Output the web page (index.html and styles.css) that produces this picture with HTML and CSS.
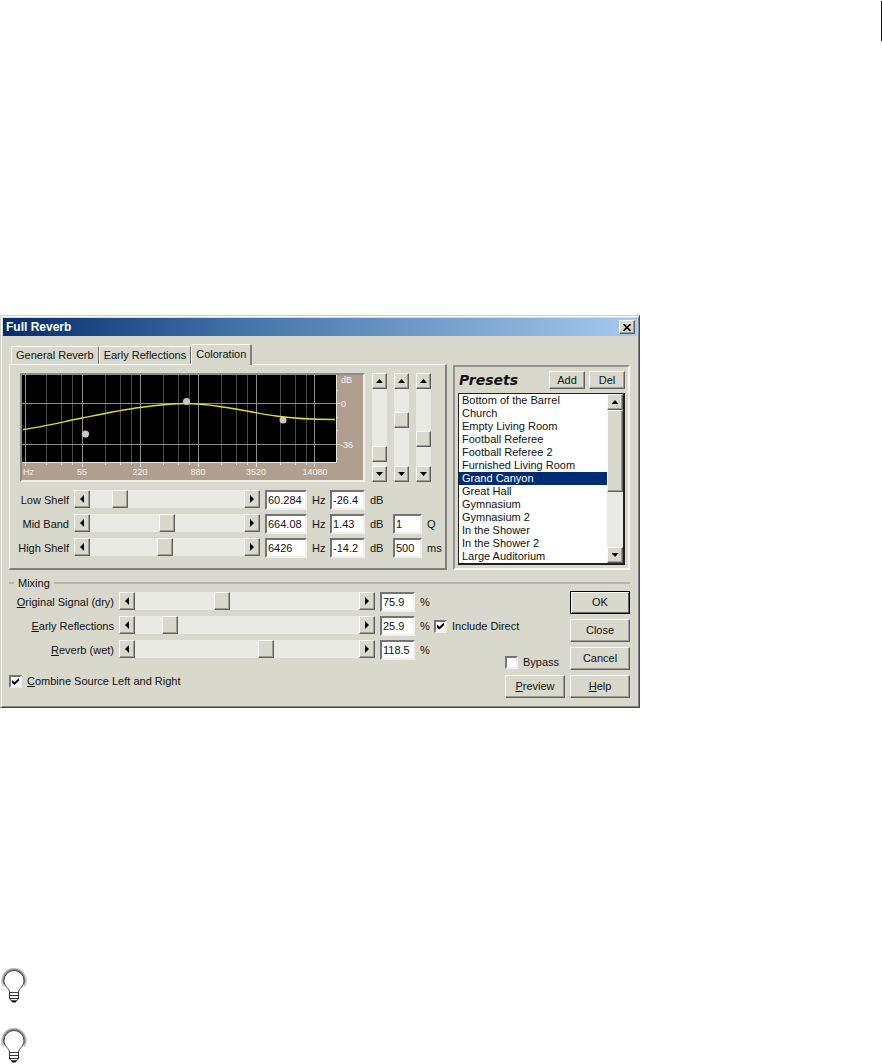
FILE: index.html
```html
<!DOCTYPE html>
<html lang="en">
<head>
    <meta charset="UTF-8">
    <meta name="viewport" content="width=device-width, initial-scale=1.0">
    <title>Full Reverb</title>
    <link rel="stylesheet" href="styles.css">
</head>
<body>

    <header class="page-top">
        <div class="page-rule"></div>
    </header>

    <main>
        <section class="dialog" aria-labelledby="dialogTitle">
            <div class="title-bar">
                <h1 id="dialogTitle">Full Reverb</h1>
                <button class="close" aria-label="Close window">
                    <svg width="8" height="7" viewBox="0 0 8 7"><path d="M0.5 0L7.5 7M7.5 0L0.5 7" stroke="#000" stroke-width="1.6"/></svg>
                </button>
            </div>

            <div class="dialog-body">
                <div class="columns">

                    <!-- Tabs -->
                    <div class="tab-area">
                        <div class="tabs" role="tablist">
                            <button class="tab" role="tab">General Reverb</button>
                            <button class="tab" role="tab">Early Reflections</button>
                            <button class="tab active" role="tab" aria-selected="true">Coloration</button>
                        </div>

                        <div class="panel">
                            <div class="graph-row">
                                <div class="graph">
                                    <svg width="341" height="105" viewBox="0 0 341 105">
                                        <rect width="341" height="105" fill="#b09f8e"/>
                                        <rect width="314" height="87" fill="#000"/>
                                        <path class="minor" d="M24.5 0V90M39.5 0V90M50.5 0V90M83.5 0V90M98.5 0V90M109.5 0V90M141.5 0V90M156.5 0V90M167.5 0V90M199.5 0V90M214.5 0V90M225.5 0V90M258.5 0V90M273.5 0V90M284.5 0V90"/>
                                        <path class="major" d="M3.5 0V92M60.5 0V92M118.5 0V92M176.5 0V92M234.5 0V92M292.5 0V92M0 28.5H317M0 69.5H317"/>
                                        <path class="ticks" d="M0 87.5H314.5V0M314 15.5H316M314 42.5H316M314 55.5H316M314 83.5H316M314 28.5H318M314 69.5H318M3.5 87V91M24.5 87V90M39.5 87V90M50.5 87V90M60.5 87V92M83.5 87V90M98.5 87V90M109.5 87V90M118.5 87V92M141.5 87V90M156.5 87V90M167.5 87V90M176.5 87V92M199.5 87V90M214.5 87V90M225.5 87V90M234.5 87V92M258.5 87V90M273.5 87V90M284.5 87V90M292.5 87V92"/>
                                        <path class="curve" d="M1 54.5C20 52 40 47 60 43C80 39 99 35 118 32.5C136 30 150 28.5 164 28.5C195 28.5 225 37 254 41C275 44 290 44.5 313 44.5"/>
                                        <g class="points">
                                            <circle cx="63.5" cy="59" r="3.5"/>
                                            <circle cx="164.5" cy="26.5" r="3.5"/>
                                            <circle cx="261" cy="45" r="3.5"/>
                                        </g>
                                        <g class="axis">
                                            <text x="1" y="100">Hz</text>
                                            <text x="60" y="100" text-anchor="middle">55</text>
                                            <text x="118" y="100" text-anchor="middle">220</text>
                                            <text x="176" y="100" text-anchor="middle">880</text>
                                            <text x="234" y="100" text-anchor="middle">3520</text>
                                            <text x="293" y="100" text-anchor="middle">14080</text>
                                            <text x="319" y="8">dB</text>
                                            <text x="319" y="32">0</text>
                                            <text x="318" y="73">-36</text>
                                        </g>
                                    </svg>
                                </div>
                                <div class="v-slider">
                                    <button class="arrow up" aria-label="Raise low shelf"></button>
                                    <input type="range" min="0" max="61" value="4" aria-label="Low shelf level">
                                    <button class="arrow down" aria-label="Lower low shelf"></button>
                                </div>
                                <div class="v-slider">
                                    <button class="arrow up" aria-label="Raise mid band"></button>
                                    <input type="range" min="0" max="61" value="38" aria-label="Mid band level">
                                    <button class="arrow down" aria-label="Lower mid band"></button>
                                </div>
                                <div class="v-slider">
                                    <button class="arrow up" aria-label="Raise high shelf"></button>
                                    <input type="range" min="0" max="61" value="19" aria-label="High shelf level">
                                    <button class="arrow down" aria-label="Lower high shelf"></button>
                                </div>
                            </div>

                            <div class="bands">
                                <label class="name" for="lowShelf">Low Shelf</label>
                                <div class="slider">
                                    <button class="arrow left" aria-label="Less"></button>
                                    <input type="range" id="lowShelf" min="0" max="138" value="22">
                                    <button class="arrow right" aria-label="More"></button>
                                </div>
                                <input class="value" type="text" id="lowHz" value="60.284">
                                <label for="lowHz">Hz</label>
                                <input class="value" type="text" id="lowDb" value="-26.4">
                                <label class="wide" for="lowDb">dB</label>

                                <label class="name" for="midBand">Mid Band</label>
                                <div class="slider">
                                    <button class="arrow left" aria-label="Less"></button>
                                    <input type="range" id="midBand" min="0" max="138" value="69">
                                    <button class="arrow right" aria-label="More"></button>
                                </div>
                                <input class="value" type="text" id="midHz" value="664.08">
                                <label for="midHz">Hz</label>
                                <input class="value" type="text" id="midDb" value="1.43">
                                <label for="midDb">dB</label>
                                <input class="value" type="text" id="midQ" value="1">
                                <label for="midQ">Q</label>

                                <label class="name" for="highShelf">High Shelf</label>
                                <div class="slider">
                                    <button class="arrow left" aria-label="Less"></button>
                                    <input type="range" id="highShelf" min="0" max="138" value="67">
                                    <button class="arrow right" aria-label="More"></button>
                                </div>
                                <input class="value" type="text" id="highHz" value="6426">
                                <label for="highHz">Hz</label>
                                <input class="value" type="text" id="highDb" value="-14.2">
                                <label for="highDb">dB</label>
                                <input class="value" type="text" id="highMs" value="500">
                                <label for="highMs">ms</label>
                            </div>
                        </div>
                    </div>

                    <!-- Presets -->
                    <div class="presets">
                        <div class="presets-head">
                            <h2><label for="presetList">Presets</label></h2>
                            <button class="btn small">Add</button>
                            <button class="btn small">Del</button>
                        </div>
                        <div class="list">
                            <select id="presetList" size="13">
                                <option>Bottom of the Barrel</option>
                                <option>Church</option>
                                <option>Empty Living Room</option>
                                <option>Football Referee</option>
                                <option>Football Referee 2</option>
                                <option>Furnished Living Room</option>
                                <option selected>Grand Canyon</option>
                                <option>Great Hall</option>
                                <option>Gymnasium</option>
                                <option>Gymnasium 2</option>
                                <option>In the Shower</option>
                                <option>In the Shower 2</option>
                                <option>Large Auditorium</option>
                            </select>
                            <div class="scrollbar">
                                <button class="arrow up" aria-label="Scroll up"></button>
                                <div class="scroll-thumb"></div>
                                <button class="arrow down" aria-label="Scroll down"></button>
                            </div>
                        </div>
                    </div>
                </div>

                <!-- Mixing -->
                <fieldset class="mixing">
                    <legend>Mixing</legend>
                    <div class="mixing-grid">
                        <div class="mixing-left">
                            <div class="mix-rows">
                                <label class="name" for="dry"><u>O</u>riginal Signal (dry)</label>
                                <div class="slider">
                                    <button class="arrow left" aria-label="Less"></button>
                                    <input type="range" id="dry" min="0" max="208" value="79">
                                    <button class="arrow right" aria-label="More"></button>
                                </div>
                                <input class="value" type="text" id="dryPct" value="75.9">
                                <label class="wide" for="dryPct">%</label>

                                <label class="name" for="early"><u>E</u>arly Reflections</label>
                                <div class="slider">
                                    <button class="arrow left" aria-label="Less"></button>
                                    <input type="range" id="early" min="0" max="208" value="27">
                                    <button class="arrow right" aria-label="More"></button>
                                </div>
                                <input class="value" type="text" id="earlyPct" value="25.9">
                                <label for="earlyPct">%</label>
                                <label class="check"><input type="checkbox" checked>Include Direct</label>

                                <label class="name" for="wet"><u>R</u>everb (wet)</label>
                                <div class="slider">
                                    <button class="arrow left" aria-label="Less"></button>
                                    <input type="range" id="wet" min="0" max="208" value="123">
                                    <button class="arrow right" aria-label="More"></button>
                                </div>
                                <input class="value" type="text" id="wetPct" value="118.5">
                                <label class="wide" for="wetPct">%</label>
                            </div>
                            <label class="check"><input type="checkbox" checked><span><u>C</u>ombine Source Left and Right</span></label>
                        </div>

                        <div class="preview">
                            <label class="check"><input type="checkbox">Bypass</label>
                            <button class="btn"><u>P</u>review</button>
                        </div>

                        <div class="actions">
                            <button class="btn default">OK</button>
                            <button class="btn">Close</button>
                            <button class="btn">Cancel</button>
                            <button class="btn"><u>H</u>elp</button>
                        </div>
                    </div>
                </fieldset>
            </div>
        </section>

        <!-- Tips -->
        <div class="tips">
            <svg class="bulb" width="28" height="36" viewBox="0 0 28 36">
                <path class="halo" d="M5 18A10.5 10.5 0 1 1 23 18"/>
                <path class="halo inner" d="M4.500 16A10.2 10.2 0 1 1 23.500 16"/>
                <path class="glass" d="M9.500 24.500C9.500 20 4 19 4 12.500A10 10 0 0 1 24 12.500C24 19 18.500 20 18.500 24.500Z"/>
                <path class="base" d="M9.500 24V31L12 33H16L18.500 31V24M9.500 27.500H18.500M9.500 30.500H18.500"/>
                <path class="cap" d="M11 32.500H17L15.500 34.500H12.500Z"/>
            </svg>
            <svg class="bulb" width="28" height="36" viewBox="0 0 28 36">
                <path class="halo" d="M5 18A10.5 10.5 0 1 1 23 18"/>
                <path class="halo inner" d="M4.500 16A10.2 10.2 0 1 1 23.500 16"/>
                <path class="glass" d="M9.500 24.500C9.500 20 4 19 4 12.500A10 10 0 0 1 24 12.500C24 19 18.500 20 18.500 24.500Z"/>
                <path class="base" d="M9.500 24V31L12 33H16L18.500 31V24M9.500 27.500H18.500M9.500 30.500H18.500"/>
                <path class="cap" d="M11 32.500H17L15.500 34.500H12.500Z"/>
            </svg>
        </div>
    </main>

</body>
</html>
```
FILE: styles.css
```css
* {
    box-sizing: border-box;
}

body {
    margin: 0;
    background: white;
    color: #111;
    font-family: "Liberation Sans", Arial, sans-serif;
    font-size: 11px;
    line-height: 13px;
}

button,
input,
select {
    margin: 0;
    padding: 0;
    border: 0;
    border-radius: 0;
    color: inherit;
    font: inherit;
}

.page-top {
    display: flex;
    justify-content: flex-end;
    padding-top: 1px;
}

.page-rule {
    width: 1px;
    height: 40px;
    background: #111;
}

/* Window */
.dialog {
    width: 640px;
    max-width: 100%;
    margin-top: 274px;
    padding: 2px;
    background: #d8d8cc;
    border: 1px solid;
    border-color: #d0d0c6 #484848 #484848 #d0d0c6;
    box-shadow: inset 1px 1px white, inset -1px -1px #848484;
}

.title-bar {
    display: flex;
    align-items: center;
    justify-content: space-between;
    height: 18px;
    padding: 0 2px 0 3px;
    background: linear-gradient(90deg, #042c6c, #4474a8 38%, #a6caf0);
    color: white;
}

.title-bar h1 {
    margin: 0;
    font-size: 12px;
    font-weight: bold;
}

.close {
    display: flex;
    align-items: center;
    justify-content: center;
    width: 16px;
    height: 14px;
}

.close,
.btn,
.arrow,
.scroll-thumb {
    background: #d8d8cc;
    border: 1px solid;
    border-color: #fafaf6 #606060 #606060 #fafaf6;
    box-shadow: inset -1px -1px #9c9c96;
}

.dialog-body {
    padding: 8px 7px 7px 6px;
}

.columns {
    display: flex;
    gap: 6px;
}

/* Tabs */
.tab-area {
    flex: 1;
    min-width: 0;
}

.tabs {
    display: flex;
    align-items: flex-end;
    height: 20px;
    padding-left: 2px;
}

.tab {
    height: 18px;
    padding: 0 4px;
    background: #d8d8cc;
    border: 1px solid;
    border-color: #fafaf6 #686868 transparent #fafaf6;
    border-radius: 2px 2px 0 0;
    white-space: nowrap;
}

.tab.active {
    position: relative;
    height: 21px;
    margin-bottom: -1px;
    padding-bottom: 2px;
    border-right: 2px solid #808080;
    border-bottom: 0;
}

.panel {
    padding: 8px 10px 10px;
    border: 1px solid #fafaf6;
    border-right: 2px solid #808080;
    border-bottom: 2px solid #808080;
}

.graph-row {
    display: flex;
    gap: 7px;
    height: 109px;
}

.graph {
    border: 2px solid;
    border-color: #8c8c88 #f0f0ea #f0f0ea #8c8c88;
}

.graph svg {
    display: block;
}

.minor,
.major,
.ticks,
.curve {
    fill: none;
}

.minor {
    stroke: #484848;
}

.major {
    stroke: #8c8c8c;
}

.ticks {
    stroke: #e8e4dc;
}

.curve {
    stroke: #e0e020;
    stroke-width: 1.3;
}

.points {
    fill: #c8c8c8;
}

.axis {
    fill: #f6f2ec;
    font-size: 9px;
}

/* Sliders */
input[type="range"] {
    -webkit-appearance: none;
    appearance: none;
    background: #eaeae5;
}

input[type="range"]::-webkit-slider-thumb {
    -webkit-appearance: none;
    appearance: none;
    width: 16px;
    height: 18px;
    background: #d8d8cc;
    border: 1px solid;
    border-color: #fafaf6 #606060 #606060 #fafaf6;
    box-shadow: inset -1px -1px #9c9c96;
}

.slider {
    display: flex;
    height: 18px;
}

.slider input {
    flex: 1;
    min-width: 0;
    height: 18px;
}

.v-slider {
    display: flex;
    flex-direction: column;
    width: 15px;
}

.v-slider input {
    flex: 1;
    width: 15px;
    min-height: 0;
    writing-mode: vertical-lr;
    direction: rtl;
}

.v-slider input::-webkit-slider-thumb {
    width: 15px;
    height: 16px;
}

.arrow {
    display: flex;
    flex: none;
    align-items: center;
    justify-content: center;
    width: 16px;
    height: 18px;
}

.v-slider .arrow,
.scrollbar .arrow {
    width: 100%;
    height: 16px;
}

.arrow::before {
    content: "";
    width: 4px;
    height: 8px;
    background: black;
}

.arrow.left::before {
    clip-path: polygon(100% 0, 100% 100%, 0 50%);
}

.arrow.right::before {
    clip-path: polygon(0 0, 100% 50%, 0 100%);
}

.arrow.up::before,
.arrow.down::before {
    width: 7px;
    height: 4px;
}

.arrow.up::before {
    clip-path: polygon(50% 0, 100% 100%, 0 100%);
}

.arrow.down::before {
    clip-path: polygon(0 0, 100% 0, 50% 100%);
}

/* Value rows */
.bands,
.mix-rows {
    display: grid;
    grid-auto-rows: 20px;
    gap: 4px 5px;
    align-items: center;
    white-space: nowrap;
}

.bands {
    grid-template-columns: 49px 186px 42px 13px 35px 18px 29px 1fr;
    margin-top: 8px;
}

.mix-rows {
    grid-template-columns: 105px 256px 35px 9px 1fr;
}

.bands .wide {
    grid-column: span 3;
}

.mix-rows .wide {
    grid-column: span 2;
}

.name {
    justify-self: end;
}

.slider {
    align-self: start;
}

.value {
    width: 100%;
    height: 20px;
    padding: 0 1px;
    background: white;
    border: 2px solid;
    border-color: #747474 #f0f0ea #f0f0ea #747474;
}

/* Presets */
.presets {
    flex: none;
    width: 177px;
    margin-top: 21px;
    padding: 4px 3px 3px;
    border: 2px solid;
    border-color: #949490 #f6f6f2 #f6f6f2 #949490;
}

.presets-head {
    display: flex;
    gap: 4px;
    margin-bottom: 4px;
}

.presets-head h2 {
    flex: 1;
    margin: 0;
    padding-left: 1px;
    font-family: "DejaVu Sans", Verdana, sans-serif;
    font-size: 14px;
    font-style: italic;
    font-weight: bold;
    line-height: 18px;
}

.list {
    display: flex;
    height: 172px;
    background: white;
    border: 1px solid #202020;
    border-right-width: 2px;
    border-bottom-width: 2px;
}

.list select {
    flex: 1;
    min-width: 0;
    height: 169px;
    background: white;
    outline: 0;
    overflow: hidden;
}

.list option {
    height: 13px;
    min-height: 13px;
    padding: 0 3px;
    line-height: 13px;
}

.list option:checked {
    background: linear-gradient(#002c74, #002c74);
    color: white;
    -webkit-text-fill-color: white;
}

.scrollbar {
    display: flex;
    flex-direction: column;
    width: 16px;
    background: #eaeae5;
}

.scroll-thumb {
    height: 82px;
    margin-bottom: auto;
}

/* Mixing */
.mixing {
    min-width: 0;
    margin: 6px 0 0;
    padding: 1px 0 0;
    border: 0;
    border-top: 2px ridge #b4b4b0;
    border-image: linear-gradient(#b4b4b0 50%, #fafaf6 50%) 2;
    border-image-width: 2px 0 0;
}

.mixing legend {
    margin-left: 5px;
    padding: 0 4px;
    line-height: 14px;
}

.mixing-grid {
    display: grid;
    grid-template-columns: 1fr 60px 60px;
    column-gap: 5px;
}

.mixing-left {
    grid-column: 1 / 3;
    grid-row: 1;
    padding-top: 1px;
}

.mixing-left > .check {
    margin-top: 15px;
}

.preview {
    display: flex;
    flex-direction: column;
    grid-column: 2;
    grid-row: 1;
    gap: 6px;
    align-self: end;
}

.actions {
    display: flex;
    flex-direction: column;
    grid-column: 3;
    grid-row: 1;
    gap: 5px;
}

.btn {
    height: 23px;
    padding: 0;
}

.btn.small {
    width: 36px;
    height: 18px;
}

.btn.default {
    outline: 1px solid black;
    outline-offset: -1px;
    border-color: black;
    box-shadow: inset 1px 1px #fafaf6, inset -1px -1px #606060;
}

.check {
    display: flex;
    align-items: center;
    gap: 5px;
    height: 13px;
}

.check input {
    display: grid;
    flex: none;
    place-items: center;
    -webkit-appearance: none;
    appearance: none;
    width: 13px;
    height: 13px;
    background: white;
    border: 2px solid;
    border-color: #747474 #f0f0ea #f0f0ea #747474;
}

.check input:checked::before {
    content: "";
    width: 7px;
    height: 7px;
    background: black;
    clip-path: polygon(0 30%, 35% 62%, 100% 0, 100% 38%, 35% 100%, 0 70%);
}

/* Tips */
.tips {
    display: flex;
    flex-direction: column;
    gap: 24px;
    margin-top: 260px;
}

.bulb {
    display: block;
}

.bulb path {
    fill: none;
}

.bulb .halo {
    stroke: #d0d0d0;
    stroke-width: 5;
}

.bulb .inner {
    stroke: #8c8c8c;
    stroke-width: 2.5;
}

.bulb .glass {
    fill: white;
    stroke: #444;
}

.bulb .base {
    stroke: #333;
}

.bulb .cap {
    fill: #111;
}
```
